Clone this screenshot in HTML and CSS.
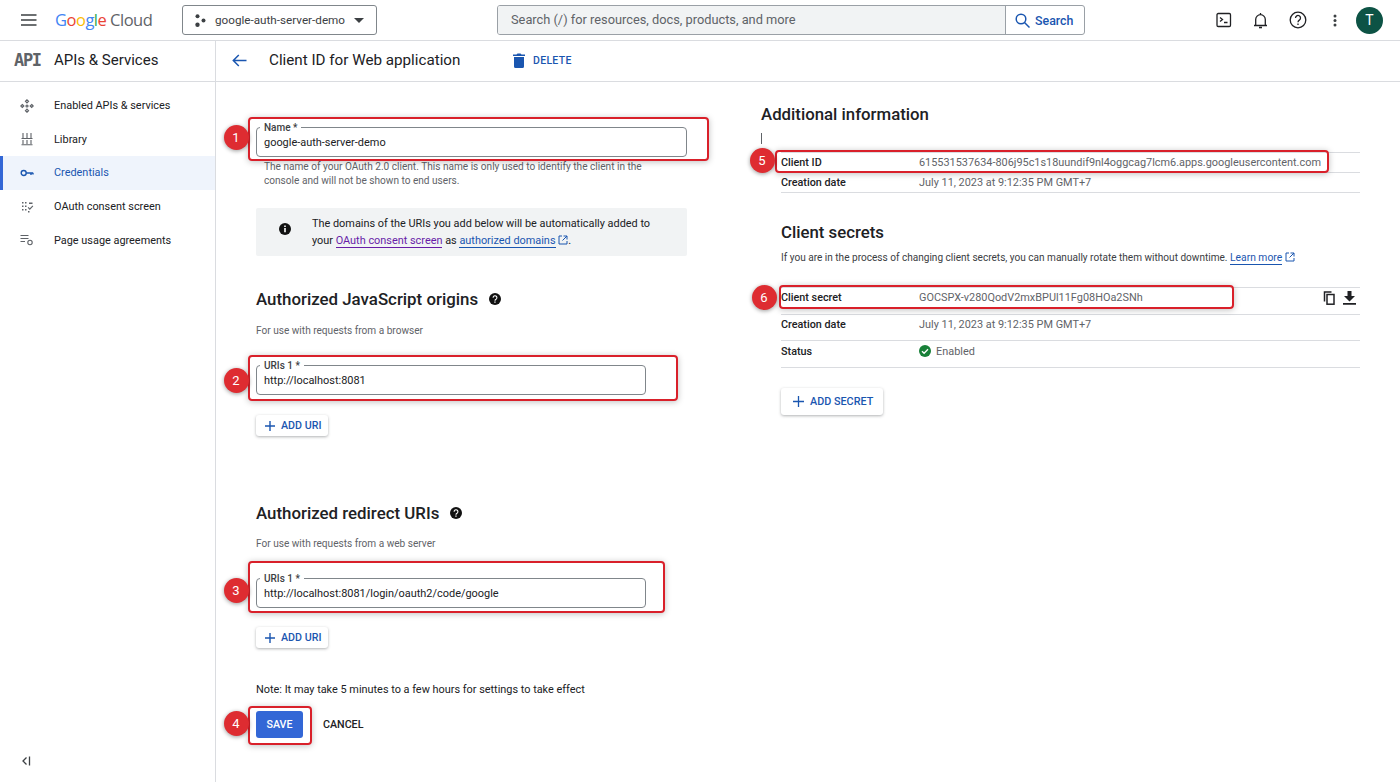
FILE: index.html
```html
<!DOCTYPE html>
<html lang="en">
<head>
    <meta charset="UTF-8">
    <title>Client ID for Web application - Google Cloud</title>
    <link rel="stylesheet" href="styles.css">
</head>
<body>
    <header class="topbar">
        <svg class="menu-icon" width="16" height="12" viewBox="0 0 16 12"><path d="M0 1h15.500M0 6h15.500M0 11h15.500" stroke="#3c4043" stroke-width="1.500"/></svg>
        <div class="logo"><span class="g-blue">G</span><span class="g-red">o</span><span class="g-yellow">o</span><span class="g-blue">g</span><span class="g-green">l</span><span class="g-red">e</span> <span class="logo-cloud">Cloud</span></div>
        <div class="project">
            <svg width="11" height="13" viewBox="0 0 11 13" fill="#3c4043"><circle cx="2.500" cy="2.300" r="2"/><circle cx="8.500" cy="6.500" r="2"/><circle cx="2.500" cy="10.700" r="2.200"/></svg>
            <span class="project-name">google-auth-server-demo</span>
            <svg width="10" height="5" viewBox="0 0 10 5" fill="#3c4043"><path d="M0 0h10L5 5z"/></svg>
        </div>
        <div class="search">
            <div class="search-input">Search (/) for resources, docs, products, and more</div>
            <div class="search-btn">
                <svg width="15" height="15" viewBox="0 0 15 15" fill="none" stroke="#1a56b0" stroke-width="1.500"><circle cx="6" cy="6" r="4.800"/><path d="M9.500 9.500l5 5"/></svg>
                Search
            </div>
        </div>
        <div class="top-icons">
            <svg width="16" height="16" viewBox="0 0 16 16" fill="none" stroke="#202124" stroke-width="1.300"><rect x="1" y="1.500" width="13.500" height="13" rx="1.200"/><path d="M4 5.500l2.500 2-2.500 2M8 10.500h3.500"/></svg>
            <svg width="15" height="17" viewBox="0 0 15 17" fill="none" stroke="#202124" stroke-width="1.300"><path d="M1 13.500h13M2.700 13.500V7.500a4.800 4.800 0 0 1 9.600 0v6M7.500 1v1.500"/><path d="M6 15.500h3" stroke-width="1.600"/></svg>
            <svg width="18" height="18" viewBox="0 0 18 18" fill="none" stroke="#202124" stroke-width="1.300"><circle cx="9" cy="9" r="7.800"/><path d="M6.500 7a2.500 2.500 0 1 1 3.800 2.100c-.9.600-1.300 1-1.300 2.100"/><path d="M9 12.500v1.500"/></svg>
            <svg width="4" height="13" viewBox="0 0 4 13" fill="#3c4043"><circle cx="2" cy="2" r="1.500"/><circle cx="2" cy="6.500" r="1.500"/><circle cx="2" cy="11" r="1.500"/></svg>
            <div class="avatar">T</div>
        </div>
    </header>

    <div class="layout">
        <aside class="sidebar">
            <div class="side-head"><span class="api-mark">API</span><span class="side-title">APIs &amp; Services</span></div>
            <nav class="side-nav">
                <a class="nav-item">
                    <svg width="14" height="14" viewBox="0 0 14 14" fill="none" stroke="#5f6368" stroke-width="1.200"><path d="M7 .8l1.500 1.500L7 3.800 5.500 2.300zM7 10.200l1.500 1.500L7 13.200l-1.500-1.500zM2.300 5.500L3.800 7 2.300 8.500.8 7zM11.700 5.500L13.200 7l-1.500 1.500L10.200 7z"/><circle cx="7" cy="7" r="1"/></svg>
                    Enabled APIs &amp; services
                </a>
                <a class="nav-item">
                    <svg width="14" height="14" viewBox="0 0 14 14" fill="none" stroke="#5f6368" stroke-width="1.100"><path d="M3 1v5M7 1v5M11 1v5M1.500 6.500h11M3 8v4M7 8v4M11 8v4M1.500 12.800h11"/></svg>
                    Library
                </a>
                <a class="nav-item active">
                    <svg width="14" height="14" viewBox="0 0 14 14" fill="none" stroke="#1a56b0" stroke-width="1.400"><circle cx="3.700" cy="7" r="2.500"/><path d="M6.200 7h7M11 7v2M13 7v1.500"/></svg>
                    Credentials
                </a>
                <a class="nav-item">
                    <svg width="14" height="14" viewBox="0 0 14 14" fill="#5f6368"><path d="M2 2h1.500v1.500H2zM5 2h1.500v1.500H5zM2 5.500h1.500V7H2zM5 5.500h1.500V7H5zM2 9h1.500v1.500H2zM5 9h1.500v1.500H5zM9 2.500h3.500V4H9zM8.500 7l1.300 1.300L12.500 5.500l.8.8L9.800 10 7.700 7.800zM8 11h1.500v1.500H8z"/></svg>
                    OAuth consent screen
                </a>
                <a class="nav-item">
                    <svg width="14" height="14" viewBox="0 0 14 14" fill="none" stroke="#5f6368" stroke-width="1.100"><path d="M.5 2.500h8M.5 5.500h8M.5 8.500h4.500"/><circle cx="10" cy="9.500" r="2.200"/></svg>
                    Page usage agreements
                </a>
            </nav>
            <svg class="collapse" width="10" height="10" viewBox="0 0 10 10" fill="none" stroke="#3c4043" stroke-width="1.300"><path d="M5.500 1.500L2 5l3.500 3.500M8.500 .5v9"/></svg>
        </aside>

        <div class="content">
            <div class="subbar">
                <svg class="back" width="15" height="13" viewBox="0 0 15 13" fill="none" stroke="#1a56b0" stroke-width="1.500"><path d="M14.500 6.500H1.500M6.800 1L1.300 6.500 6.800 12"/></svg>
                <h1 class="page-title">Client ID for Web application</h1>
                <div class="delete">
                    <svg width="12" height="15" viewBox="0 0 12 15" fill="#1a56b0"><path d="M1 4h10v9.500a1.500 1.500 0 0 1-1.500 1.500h-7A1.500 1.500 0 0 1 1 13.500zM0 1.500h3.500L4.500.5h3l1 1H12V3H0z"/></svg>
                    DELETE
                </div>
            </div>

            <main class="panels">
                <section class="left">
                    <div class="field field-name">
                        <span class="field-label">Name *</span>
                        <span class="field-value">google-auth-server-demo</span>
                        <div class="callout c1"><span class="badge">1</span></div>
                    </div>
                    <p class="help">The name of your OAuth 2.0 client. This name is only used to identify the client in the console and will not be shown to end users.</p>

                    <div class="notice">
                        <svg width="12" height="12" viewBox="0 0 12 12"><circle cx="6" cy="6" r="6" fill="#111"/><path d="M5.200 5h1.600v4.300H5.200zM5.200 2.600h1.600v1.500H5.200z" fill="#fff"/></svg>
                        <div class="notice-text">
                            <p>The domains of the URIs you add below will be automatically added to</p>
                            <p><span>your</span> <a class="visited">OAuth consent screen</a> <span>as</span> <a class="link">authorized domains</a>
                                <svg class="ext" width="10" height="10" viewBox="0 0 10 10" fill="none" stroke="#1a56b0" stroke-width="1"><path d="M4 1H1v8h8V6M5.500 1H9v3.500M9 1L4.500 5.500"/></svg><span>.</span></p>
                        </div>
                    </div>

                    <h2 class="sec-title first">Authorized JavaScript origins
                        <svg width="12" height="12" viewBox="0 0 12 12"><circle cx="6" cy="6" r="6" fill="#111"/><path d="M4.100 4.700a1.900 1.900 0 1 1 2.900 1.600c-.7.400-1 .7-1 1.400" fill="none" stroke="#fff" stroke-width="1.100"/><path d="M5.300 8.500h1.300v1.300H5.300z" fill="#fff"/></svg>
                    </h2>
                    <p class="sec-sub sub-first">For use with requests from a browser</p>
                    <div class="field field-uri">
                        <span class="field-label">URIs 1 *</span>
                        <span class="field-value">http://localhost:8081</span>
                        <div class="callout c2"><span class="badge">2</span></div>
                    </div>
                    <button class="btn-outline add-uri">
                        <svg width="10" height="10" viewBox="0 0 10 10" stroke="#1a56b0" stroke-width="1.400"><path d="M5 0v10M0 5h10"/></svg>
                        ADD URI
                    </button>

                    <h2 class="sec-title second">Authorized redirect URIs
                        <svg width="12" height="12" viewBox="0 0 12 12"><circle cx="6" cy="6" r="6" fill="#111"/><path d="M4.100 4.700a1.900 1.900 0 1 1 2.900 1.600c-.7.400-1 .7-1 1.400" fill="none" stroke="#fff" stroke-width="1.100"/><path d="M5.300 8.500h1.300v1.300H5.300z" fill="#fff"/></svg>
                    </h2>
                    <p class="sec-sub">For use with requests from a web server</p>
                    <div class="field field-uri">
                        <span class="field-label">URIs 1 *</span>
                        <span class="field-value">http://localhost:8081/login/oauth2/code/google</span>
                        <div class="callout c3"><span class="badge">3</span></div>
                    </div>
                    <button class="btn-outline add-uri add-uri-2">
                        <svg width="10" height="10" viewBox="0 0 10 10" stroke="#1a56b0" stroke-width="1.400"><path d="M5 0v10M0 5h10"/></svg>
                        ADD URI
                    </button>

                    <p class="note">Note: It may take 5 minutes to a few hours for settings to take effect</p>
                    <div class="actions">
                        <button class="btn-save">SAVE
                            <span class="callout c4"><span class="badge">4</span></span>
                        </button>
                        <button class="btn-cancel">CANCEL</button>
                    </div>
                </section>

                <section class="right">
                    <h2 class="info-title">Additional information</h2>
                    <div class="cursor"></div>
                    <div class="rows">
                        <div class="row row-sm">
                            <span class="row-label">Client ID</span>
                            <span class="row-value">615531537634-806j95c1s18uundif9nl4oggcag7lcm6.apps.googleusercontent.com</span>
                            <div class="callout c5"><span class="badge">5</span></div>
                        </div>
                        <div class="row row-sm">
                            <span class="row-label">Creation date</span>
                            <span class="row-value">July 11, 2023 at 9:12:35 PM GMT+7</span>
                        </div>
                    </div>

                    <h2 class="secrets-title">Client secrets</h2>
                    <p class="secrets-desc"><span>If you are in the process of changing client secrets, you can manually rotate them without downtime.</span> <a class="link">Learn more</a>
                        <svg class="ext" width="10" height="10" viewBox="0 0 10 10" fill="none" stroke="#1a56b0" stroke-width="1"><path d="M4 1H1v8h8V6M5.500 1H9v3.500M9 1L4.500 5.500"/></svg></p>

                    <div class="rows rows-secret">
                        <div class="row">
                            <span class="row-label">Client secret</span>
                            <span class="row-value">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</span>
                            <span class="row-tools">
                                <svg width="12" height="14" viewBox="0 0 12 14" fill="none" stroke="#202124" stroke-width="1.500"><path d="M8.500 1H1.500v9.500"/><rect x="4" y="3.500" width="7" height="9.700"/></svg>
                                <svg width="13" height="14" viewBox="0 0 13 14" fill="#202124"><path d="M4.500 0h4v5h3.500L6.500 10.500 1 5h3.500zM0 12h13v1.800H0z"/></svg>
                            </span>
                            <div class="callout c6"><span class="badge">6</span></div>
                        </div>
                        <div class="row">
                            <span class="row-label">Creation date</span>
                            <span class="row-value">July 11, 2023 at 9:12:35 PM GMT+7</span>
                        </div>
                        <div class="row">
                            <span class="row-label">Status</span>
                            <span class="row-value status">
                                <svg width="12" height="12" viewBox="0 0 12 12"><circle cx="6" cy="6" r="6" fill="#188038"/><path d="M3 6.200l2.100 2.100L9 4.300" fill="none" stroke="#fff" stroke-width="1.300"/></svg>
                                Enabled
                            </span>
                        </div>
                    </div>
                    <button class="btn-outline add-secret">
                        <svg width="11" height="11" viewBox="0 0 11 11" stroke="#1a56b0" stroke-width="1.300"><path d="M5.500 0v11M0 5.500h11"/></svg>
                        ADD SECRET
                    </button>
                </section>
            </main>
        </div>
    </div>
</body>
</html>
```

FILE: styles.css
```css
* {
    box-sizing: border-box;
    margin: 0;
    padding: 0;
}

html, body {
    height: 782px;
    overflow: hidden;
}

body {
    font-family: Roboto, "Liberation Sans", sans-serif;
    background-color: white;
    color: #202124;
    font-size: 11px;
}

/* top bar */
.topbar {
    display: flex;
    align-items: center;
    height: 41px;
    border-bottom: 1px solid #dadce0;
    padding-left: 21px;
}

.logo {
    margin-left: 18px;
    padding-bottom: 2px;
    width: 127px;
    font-family: "Open Sans", sans-serif;
    font-size: 16.5px;
    letter-spacing: -0.5px;
    white-space: nowrap;
}

.g-blue { color: #4285f4; }
.g-red { color: #ea4335; }
.g-yellow { color: #fbbc04; }
.g-green { color: #34a853; }
.logo-cloud { color: #5f6368; }

.project {
    display: flex;
    align-items: center;
    width: 195px;
    height: 30px;
    border: 1px solid #80868b;
    border-radius: 3px;
    padding-left: 12px;
}

.project-name {
    margin-left: 9px;
    width: 139px;
    flex-shrink: 0;
    font-size: 11.700px;
    white-space: nowrap;
    color: #3c4043;
}

.search {
    display: flex;
    width: 588px;
    height: 30px;
    margin-left: 120px;
    border: 1px solid #9aa0a6;
    border-radius: 3px;
    overflow: hidden;
}

.search-input {
    width: 508px;
    padding-left: 13px;
    line-height: 28px;
    background-color: #f1f3f4;
    border-right: 1px solid #9aa0a6;
    font-size: 12.800px;
    color: #5f6368;
}

.search-btn {
    display: flex;
    align-items: center;
    gap: 5px;
    padding-left: 9px;
    font-size: 12.400px;
    font-weight: 500;
    color: #1a56b0;
}

.top-icons {
    display: flex;
    align-items: center;
    margin-left: 131px;
}

.top-icons svg:nth-child(1) { margin-right: 21px; }
.top-icons svg:nth-child(2) { margin-right: 21px; }
.top-icons svg:nth-child(3) { margin-right: 26px; }
.top-icons svg:nth-child(4) { margin-right: 19px; }

.avatar {
    width: 27px;
    height: 27px;
    border-radius: 50%;
    background-color: #0d5345;
    color: white;
    font-size: 14px;
    line-height: 27px;
    text-align: center;
}

/* page */
.layout {
    display: flex;
    height: 741px;
}

.sidebar {
    position: relative;
    width: 216px;
    flex-shrink: 0;
    border-right: 1px solid #dadce0;
}

.side-head {
    display: flex;
    align-items: center;
    height: 41px;
    border-bottom: 1px solid #dadce0;
    padding: 0 0 2px 14px;
}

.api-mark {
    width: 40px;
    font-family: "DejaVu Sans Mono", monospace;
    font-size: 17px;
    font-weight: bold;
    letter-spacing: -1.300px;
    color: #5f6368;
}

.side-title {
    font-size: 15px;
    color: #202124;
}

.side-nav {
    padding-top: 7px;
}

.nav-item {
    display: flex;
    align-items: center;
    gap: 20px;
    height: 33.6px;
    padding-left: 20px;
    font-size: 10.900px;
    color: #202124;
}

.nav-item.active {
    background-color: #eff4fc;
    border-left: 3px solid #3367d6;
    padding-left: 17px;
    color: #1a56b0;
}

.collapse {
    position: absolute;
    left: 21px;
    bottom: 16px;
}

.content {
    flex: 1;
}

.subbar {
    display: flex;
    align-items: center;
    height: 41px;
    border-bottom: 1px solid #dadce0;
    padding: 0 0 2px 16px;
}

.page-title {
    margin-left: 22px;
    width: 244px;
    font-size: 15.200px;
    font-weight: 400;
}

.delete {
    display: flex;
    align-items: center;
    gap: 8px;
    font-size: 10.500px;
    font-weight: 500;
    color: #1a56b0;
    letter-spacing: 0.3px;
}

.panels {
    display: flex;
}

.left {
    width: 472px;
    padding-left: 40px;
    padding-top: 45px;
    flex-shrink: 0;
}

/* fields */
.field {
    position: relative;
    display: flex;
    align-items: center;
    height: 30px;
    border: 1px solid #80868b;
    border-radius: 4px;
    padding-left: 7px;
}

.field-name { width: 431px; }
.field-uri { width: 390px; margin-top: 27px; }

.field-label {
    position: absolute;
    top: -6px;
    left: 3px;
    padding: 0 4px;
    background-color: white;
    font-size: 10px;
    line-height: 12px;
    font-weight: 500;
    color: #3c4043;
}

.field-value {
    font-size: 10.950px;
}

.help {
    width: 400px;
    margin: 3px 0 0 8px;
    font-size: 10.100px;
    line-height: 14px;
    color: #5f6368;
}

.notice {
    display: flex;
    align-items: flex-start;
    gap: 21px;
    width: 431px;
    height: 48px;
    margin-top: 20px;
    padding: 7px 0 0 23px;
    background-color: #f1f3f4;
    border-radius: 2px;
}

.notice > svg {
    margin-top: 8px;
    flex-shrink: 0;
}

.notice-text {
    font-size: 10.900px;
    line-height: 17px;
    white-space: nowrap;
}

.visited {
    color: #681da8;
    border-bottom: 1px solid #681da8;
}

.link {
    color: #1a56b0;
    border-bottom: 1px solid #1a56b0;
}

.ext {
    vertical-align: -1px;
}

.sec-title {
    display: flex;
    align-items: center;
    gap: 11px;
    font-size: 16.850px;
    font-weight: 500;
    line-height: 24px;
}

.sec-title svg {
    margin-top: 0;
}

.sec-title.first { margin-top: 31px; }
.sec-title.second { margin-top: 65px; }

.sec-sub {
    margin-top: 12px;
    font-size: 10.100px;
    line-height: 14px;
    color: #5f6368;
}

.sub-first { margin-top: 13px; }

.btn-outline {
    display: flex;
    align-items: center;
    background-color: white;
    border: none;
    border-radius: 3px;
    box-shadow: 0 1px 3px rgba(60, 64, 67, 0.4);
    font-family: Roboto, sans-serif;
    font-size: 10.700px;
    font-weight: 500;
    color: #1a56b0;
}

.add-uri {
    gap: 6px;
    width: 72px;
    height: 21px;
    margin-top: 20px;
    padding-left: 9px;
}

.add-uri-2 { margin-top: 19px; }

.note {
    margin-top: 35px;
    font-size: 10.900px;
    line-height: 14px;
}

.actions {
    display: flex;
    align-items: center;
    gap: 20px;
    margin-top: 14px;
}

.btn-save {
    position: relative;
    width: 47px;
    height: 27px;
    border: none;
    border-radius: 3px;
    background-color: #3367d6;
    color: white;
    font-family: Roboto, sans-serif;
    font-size: 10.700px;
    font-weight: 500;
}

.btn-cancel {
    border: none;
    background: none;
    font-family: Roboto, sans-serif;
    font-size: 10.700px;
    font-weight: 500;
    color: #202124;
}

/* right column */
.right {
    flex: 1;
    padding: 20px 40px 0 0;
    margin-left: 73px;
}

.info-title, .secrets-title {
    font-size: 16.800px;
    font-weight: 500;
    line-height: 24px;
}

.cursor {
    width: 1px;
    height: 11px;
    margin-top: 7px;
    background-color: #5f6368;
}

.rows {
    margin: 8px 0 0 20px;
    border-top: 1px solid #dadce0;
}

.rows-secret {
    margin-top: 22px;
}

.row {
    position: relative;
    display: flex;
    align-items: center;
    height: 26.670px;
    padding-bottom: 6px;
    border-bottom: 1px solid #dadce0;
}

.row-sm {
    height: 20px;
    padding-bottom: 0;
}

.row-label {
    width: 138px;
    font-size: 10.800px;
    font-weight: 500;
}

.row-value {
    font-size: 10.900px;
    color: #5f6368;
}

.status {
    display: flex;
    align-items: center;
    gap: 5px;
}

.row-tools {
    display: flex;
    gap: 8px;
    margin-left: auto;
    margin-right: 4px;
}

.secrets-title {
    margin: 27px 0 0 20px;
}

.secrets-desc {
    margin: 7px 0 0 20px;
    font-size: 10.070px;
    line-height: 14px;
    color: #3c4043;
}

.secrets-desc .link {
    font-size: 10.300px;
}

.add-secret {
    gap: 6px;
    width: 102px;
    height: 27px;
    margin: 20px 0 0 20px;
    padding-left: 12px;
    font-size: 10.800px;
}

/* red annotations drawn on top of the screenshot */
.callout {
    position: absolute;
    display: block;
    border: 2px solid #d9202a;
    border-radius: 4px;
    box-shadow: 0 1px 6px rgba(0, 0, 0, 0.25);
    pointer-events: none;
}

.badge {
    position: absolute;
    top: 50%;
    left: -26.500px;
    width: 25px;
    height: 25px;
    margin-top: -12.500px;
    border-radius: 50%;
    background-color: #de2c31;
    box-shadow: 0 1px 4px rgba(0, 0, 0, 0.4);
    color: white;
    font-size: 13px;
    font-weight: 400;
    line-height: 25px;
    text-align: center;
}

.c1 { left: -9px; top: -11px; width: 461px; height: 44px; }
.c2 { left: -9px; top: -11px; width: 430px; height: 46px; }
.c3 { left: -9px; top: -18px; width: 417px; height: 52px; }
.c4 { left: -8px; top: -5px; width: 64px; height: 39px; }
.c5 { left: -6px; top: -3px; width: 554px; height: 23px; }
.c6 { left: -2px; top: -3px; width: 455px; height: 24px; }

.c1 .badge { margin-top: -14px; }
.c2 .badge { margin-top: -10.500px; }
.c3 .badge { margin-top: -9.500px; }
.c4 .badge { margin-top: -14.500px; }
.c5 .badge { left: -27.500px; margin-top: -14px; }
.c6 .badge { left: -29.500px; }
```
